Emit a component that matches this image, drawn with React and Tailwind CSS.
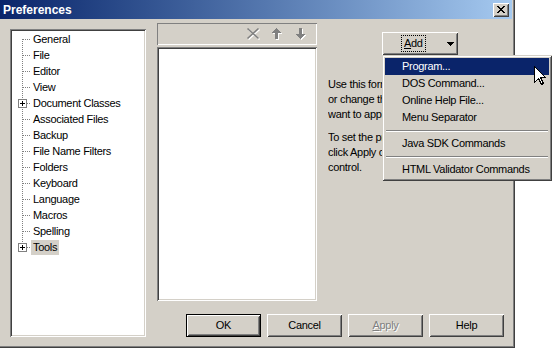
import React from 'react'

const raised =
  'shadow-[inset_1px_1px_0_#ffffff,inset_-1px_-1px_0_#404040,inset_2px_2px_0_#d4d0c8,inset_-2px_-2px_0_#808080]'
const sunken =
  'shadow-[inset_1px_1px_0_#808080,inset_-1px_-1px_0_#ffffff,inset_2px_2px_0_#404040,inset_-2px_-2px_0_#d4d0c8]'

const treeItems = [
  { label: 'General' },
  { label: 'File' },
  { label: 'Editor' },
  { label: 'View' },
  { label: 'Document Classes', expandable: true },
  { label: 'Associated Files' },
  { label: 'Backup' },
  { label: 'File Name Filters' },
  { label: 'Folders' },
  { label: 'Keyboard' },
  { label: 'Language' },
  { label: 'Macros' },
  { label: 'Spelling' },
  { label: 'Tools', expandable: true, selected: true },
]

const menuItems = [
  { label: 'Program...', active: true },
  { label: 'DOS Command...' },
  { label: 'Online Help File...' },
  { label: 'Menu Separator' },
  { sep: true },
  { label: 'Java SDK Commands' },
  { sep: true },
  { label: 'HTML Validator Commands' },
]

// connector lines of the tree view
const TreeLines = ({ first, last, expandable }) => (
  <svg width="19" height="16" className="shrink-0" shapeRendering="crispEdges">
    <line
      x1="10.5"
      y1={first ? 8 : 0}
      x2="10.5"
      y2={last ? 8 : 16}
      stroke="#808080"
      strokeDasharray="1 1"
    />
    <line x1="11" y1="8.5" x2="19" y2="8.5" stroke="#808080" strokeDasharray="1 1" />
    {expandable && (
      <g>
        <rect x="6.5" y="4.5" width="8" height="8" fill="#fff" stroke="#808080" />
        <line x1="8" y1="8.5" x2="13" y2="8.5" stroke="#000" />
        <line x1="10.5" y1="6" x2="10.5" y2="11" stroke="#000" />
      </g>
    )}
  </svg>
)

const ToolIcon = ({ children }) => (
  <svg width="15" height="14" viewBox="0 0 15 14" shapeRendering="crispEdges">
    <g transform="translate(1,1)" fill="#fff" stroke="#fff">{children}</g>
    <g fill="#808080" stroke="#808080">{children}</g>
  </svg>
)

const Button = ({ children, isDefault, disabled }) => (
  <div
    className={`w-[75px] h-[23px] flex items-center justify-center ${
      isDefault ? 'border border-black' : ''
    }`}
  >
    <div className={`w-full h-full flex items-center justify-center ${raised}`}>
      <span
        className={
          disabled ? 'text-[#808080] [text-shadow:1px_1px_0_#ffffff]' : 'text-black'
        }
      >
        {children}
      </span>
    </div>
  </div>
)

export default function App() {
  return (
    <div
      className="w-[554px] h-[351px] bg-white overflow-hidden text-[11px] tracking-[-0.3px] text-black"
      style={{ fontFamily: '"Liberation Sans", Arial, sans-serif' }}
    >
      <div className="w-[515px] h-[348px] bg-[#d4d0c8] pr-[3px] pb-[3px] shadow-[inset_-1px_-1px_0_#404040,inset_-2px_-2px_0_#808080]">
        {/* title bar */}
        <div className="h-[19px] flex items-center justify-between bg-linear-to-r from-[#0a246a] to-[#a6caf0] pl-[3px] pr-[3px]">
          <span className="text-white font-bold text-[12px] tracking-normal leading-none">
            Preferences
          </span>
          <div className={`w-[16px] h-[14px] bg-[#d4d0c8] flex items-center justify-center ${raised}`}>
            <svg width="8" height="7" viewBox="0 0 8 7" shapeRendering="crispEdges">
              <path d="M0 0h2v1h1v1h2v-1h1v-1h2v1h-1v1h-1v1h-1v1h1v1h1v1h1v1h-2v-1h-1v-1h-2v1h-1v1h-2v-1h1v-1h1v-1h1v-1h-1v-1h-1v-1h-1z" fill="#000" />
            </svg>
          </div>
        </div>

        {/* body */}
        <div className="h-[326px] flex pl-[10px]">
          {/* tree */}
          <div className={`mt-[10px] w-[136px] h-[308px] bg-white p-[2px] ${sunken}`}>
            {treeItems.map((item, i) => (
              <div key={item.label} className="h-[16px] flex items-center">
                <TreeLines
                  first={i === 0}
                  last={i === treeItems.length - 1}
                  expandable={item.expandable}
                />
                <span
                  className={`px-[2px] h-[15px] leading-[15px] whitespace-nowrap ${
                    item.selected ? 'bg-[#d4d0c8]' : ''
                  }`}
                >
                  {item.label}
                </span>
              </div>
            ))}
          </div>

          {/* right side */}
          <div className="ml-[11px] w-[347px] flex flex-col">
            <div className="flex mt-[4px]">
              {/* tool list */}
              <div className="w-[160px] flex flex-col">
                <div className="h-[22px] flex items-center justify-end gap-[9px] pr-[8px] shadow-[inset_1px_1px_0_#808080,inset_-1px_-1px_0_#ffffff]">
                  <ToolIcon>
                    <path d="M1.5 1.5L12.5 11.5M12.5 1.5L1.5 11.5" strokeWidth="1.6" fill="none" shapeRendering="auto" />
                  </ToolIcon>
                  <ToolIcon>
                    <path d="M6 1L11 6H8V12H5V6H1Z" stroke="none" />
                  </ToolIcon>
                  <ToolIcon>
                    <path d="M5 1H8V7H11L6.5 12L2 7H5Z" stroke="none" />
                  </ToolIcon>
                </div>
                <div className={`mt-[2px] h-[254px] bg-white ${sunken}`} />
              </div>

              {/* info column */}
              <div className="ml-[11px] flex-1 flex flex-col">
                <div className="relative ml-[54px] mt-[9px] w-[76px] h-[23px] z-10">
                  <div className={`w-full h-full flex items-center ${raised}`}>
                    <span className="ml-[20px] px-[2px] h-[15px] leading-[15px] outline outline-1 outline-dotted outline-black">
                      <span className="underline">A</span>dd
                    </span>
                    <svg width="7" height="4" className="ml-[22px]" shapeRendering="crispEdges">
                      <path d="M0 0H7L3.5 4Z" fill="#000" />
                    </svg>
                  </div>

                  {/* dropdown menu */}
                  <div className="absolute left-0 top-full w-[170px] bg-[#d4d0c8] p-[3px] shadow-[inset_1px_1px_0_#d4d0c8,inset_-1px_-1px_0_#404040,inset_2px_2px_0_#ffffff,inset_-2px_-2px_0_#808080]">
                    {menuItems.map((m, i) =>
                      m.sep ? (
                        <div key={i} className="h-[9px] flex flex-col justify-center px-[1px]">
                          <div className="h-px bg-[#808080]" />
                          <div className="h-px bg-white" />
                        </div>
                      ) : (
                        <div
                          key={i}
                          className={`h-[17px] flex items-center pl-[17px] whitespace-nowrap ${
                            m.active ? 'bg-[#0a246a] text-white' : ''
                          }`}
                        >
                          {m.label}
                        </div>
                      )
                    )}
                    <svg
                      width="13"
                      height="20"
                      viewBox="0 0 13 20"
                      className="absolute left-[152px] top-[11px]"
                      shapeRendering="crispEdges"
                    >
                      <path
                        d="M0.5 0.5V16.5L4.5 12.5L7.5 18.5L9.5 17.5L6.5 11.5H11.5Z"
                        fill="#fff"
                        stroke="#000"
                        strokeLinejoin="miter"
                      />
                    </svg>
                  </div>
                </div>

                {/* help text, the part right of x=382 lies under the open menu */}
                <div className="w-[54px] overflow-hidden">
                  <div className="mt-[22px] leading-[15px] whitespace-nowrap">
                    <div>Use this form to add new tools,</div>
                    <div>or change the existing tools you</div>
                    <div>want to apply to documents.</div>
                  </div>
                  <div className="mt-[8px] leading-[15px] whitespace-nowrap">
                    <div>To set the properties of a tool,</div>
                    <div>click Apply or select it in the list</div>
                    <div>control.</div>
                  </div>
                </div>
              </div>
            </div>

            {/* buttons */}
            <div className="mt-[13px] flex justify-end gap-[6px]">
              <Button isDefault>OK</Button>
              <Button>Cancel</Button>
              <Button disabled>
                <span className="underline">A</span>pply
              </Button>
              <Button>Help</Button>
            </div>
          </div>
        </div>
      </div>
    </div>
  )
}
